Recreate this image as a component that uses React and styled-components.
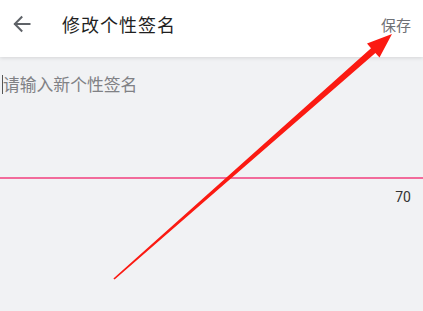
import React from "react";
import styled, { createGlobalStyle } from "styled-components";

const Global = createGlobalStyle`
  html, body { margin: 0; padding: 0; }
  body {
    width: 423px; height: 311px; overflow: hidden;
    background: #f1f2f4;
    font-family: "Noto Sans CJK SC", "Noto Sans", sans-serif;
  }
`;

const Page = styled.div`
  position: relative;
  width: 423px;
  height: 311px;
  display: flex;
  flex-direction: column;
  background: #f1f2f4;
`;

const Header = styled.header`
  height: 57px;
  flex: none;
  display: flex;
  align-items: center;
  background: #ffffff;
  box-shadow: 0 1px 4px rgba(0, 0, 0, 0.12);
  position: relative;
  z-index: 1;
  padding: 0 12px 9px 11px;
  box-sizing: border-box;
`;

const BackButton = styled.div`
  width: 22px;
  height: 22px;
  display: flex;
  align-items: center;
  justify-content: center;
  color: #5f6368;
`;

const Title = styled.h1`
  margin: 0 0 0 29px;
  font-size: 18px;
  font-weight: 400;
  color: #1f1f1f;
  flex: 1;
  letter-spacing: 1px;
`;

const Save = styled.span`
  font-size: 15px;
  color: #6f7176;
`;

const Editor = styled.div`
  padding: 15px 0 0 2px;
  height: 120px;
  box-sizing: border-box;
  display: flex;
  align-items: flex-start;
`;

const Cursor = styled.span`
  width: 1px;
  height: 19px;
  background: #555;
  margin-top: 3px;
`;

const Placeholder = styled.span`
  font-size: 16.8px;
  color: #808185;
  line-height: 24px;
`;

const Divider = styled.div`
  height: 2px;
  background: #f26b9b;
`;

const Counter = styled.div`
  text-align: right;
  padding: 10px 12px 0 0;
  font-family: "Roboto", "Noto Sans", sans-serif;
  font-size: 14px;
  color: #333;
`;

const Annotation = styled.svg`
  position: absolute;
  left: 0;
  top: 0;
  z-index: 2;
  pointer-events: none;
`;

export default function App() {
  return (
    <>
      <Global />
      <Page>
        <Header>
          <BackButton>
            <svg width="20" height="20" viewBox="0 0 20 20" fill="none" stroke="currentColor" strokeWidth="2" strokeLinecap="square">
              <path d="M17.5 10H3" />
              <path d="M9.5 3.2L2.8 10l6.7 6.8" />
            </svg>
          </BackButton>
          <Title>修改个性签名</Title>
          <Save>保存</Save>
        </Header>
        <Editor>
          <Cursor />
          <Placeholder>请输入新个性签名</Placeholder>
        </Editor>
        <Divider />
        <Counter>70</Counter>
        <Annotation width="423" height="311" viewBox="0 0 423 311">
          <polygon
            fill="#fb1a12"
            points="114.6,279.6 375.4,53 379.5,57.5 392,34 367,43.5 371,48.3 113.4,278.4"
          />
        </Annotation>
      </Page>
    </>
  );
}
